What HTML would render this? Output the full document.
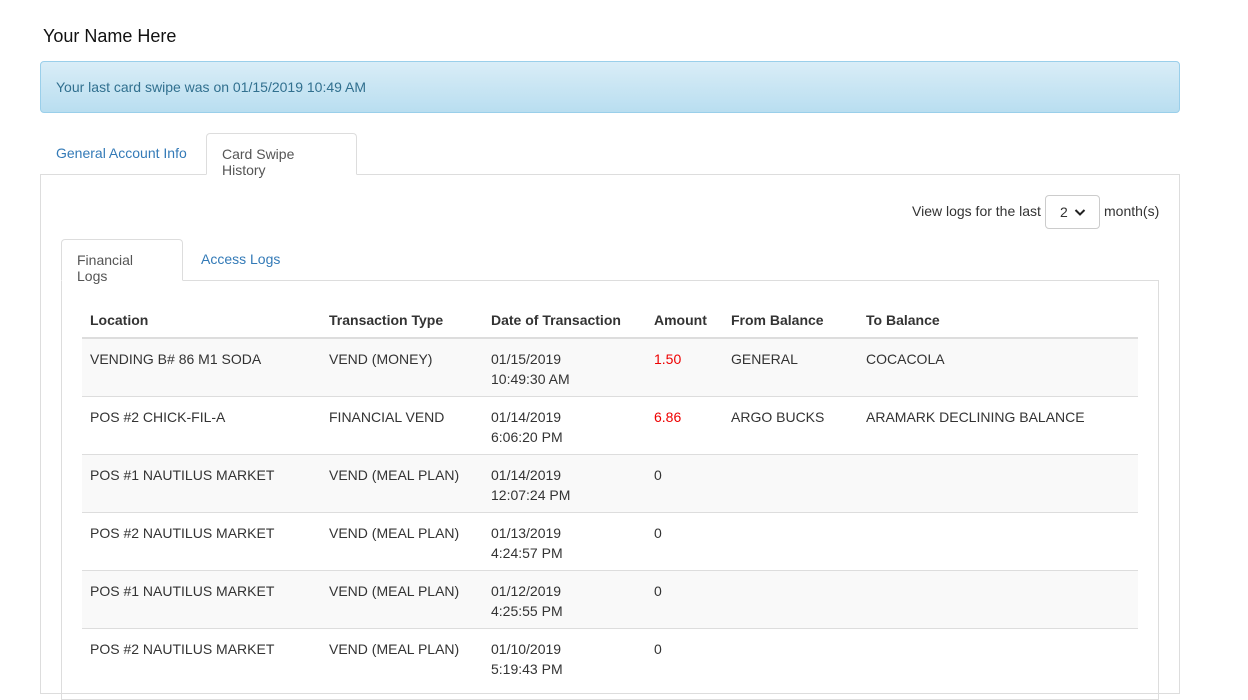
<!DOCTYPE html>
<html><head><style>
*{box-sizing:border-box}
body{margin:0;font-family:"Liberation Sans",Arial,sans-serif;font-size:14px;color:#333;background:#fff;width:1248px;height:681px;overflow:hidden;position:relative}
.abs{position:absolute}
h1{position:absolute;left:43px;top:26px;margin:0;font-size:18px;font-weight:normal;color:#111}
.alert{left:40px;top:61px;width:1140px;height:52px;border:1px solid #9acfea;border-radius:4px;background:linear-gradient(#d9edf7,#b9def0);color:#31708f;padding:17px 15px}
.tab{height:42px;padding:12px 15px;color:#337ab7}
.tab.act{border:1px solid #ddd;border-bottom:1px solid #fff;border-radius:4px 4px 0 0;color:#555;background:#fff}
.panel{left:40px;top:174px;width:1140px;height:520px;border:1px solid #ddd}
.panel2{left:61px;top:280px;width:1098px;height:420px;border:1px solid #ddd}
table{position:absolute;left:82px;top:301px;width:1056px;border-collapse:collapse}
th{text-align:left;padding:10px 8px 9px;border-bottom:2px solid #ddd;font-weight:bold;height:37px}
td{padding:10px 8px 7px;border-top:1px solid #ddd;vertical-align:top;line-height:20px;height:57px}
tr.s td{background:#f9f9f9}
.r{color:#e00}
</style></head><body>
<h1>Your Name Here</h1>
<div class="abs alert">Your last card swipe was on 01/15/2019 10:49 AM</div>
<div class="abs panel"></div>
<div class="abs tab" style="left:41px;top:133px">General Account Info</div>
<div class="abs tab act" style="left:206px;top:133px;width:151px">Card Swipe History</div>
<div class="abs" style="left:912px;top:203px">View logs for the last</div>
<div class="abs" style="left:1045px;top:195px;width:55px;height:34px;border:1px solid #ccc;border-radius:4px;padding:8px 0 0 14px">2 <svg width="12" height="9" viewBox="0 0 12 9" style="margin-left:2px"><path d="M1.5 2 L6 6.5 L10.5 2" fill="none" stroke="#222" stroke-width="2"/></svg></div>
<div class="abs" style="left:1104px;top:203px">month(s)</div>
<div class="abs panel2"></div>
<div class="abs tab act" style="left:61px;top:239px;width:122px">Financial Logs</div>
<div class="abs tab" style="left:186px;top:239px">Access Logs</div>
<table>
<colgroup><col style="width:239px"><col style="width:162px"><col style="width:163px"><col style="width:77px"><col style="width:135px"><col></colgroup>
<tr><th>Location</th><th>Transaction Type</th><th>Date of Transaction</th><th>Amount</th><th>From Balance</th><th>To Balance</th></tr>
<tr class="s"><td>VENDING B# 86 M1 SODA</td><td>VEND (MONEY)</td><td>01/15/2019<br>10:49:30 AM</td><td class="r">1.50</td><td>GENERAL</td><td>COCACOLA</td></tr>
<tr><td>POS #2 CHICK-FIL-A</td><td>FINANCIAL VEND</td><td>01/14/2019<br>6:06:20 PM</td><td class="r">6.86</td><td>ARGO BUCKS</td><td>ARAMARK DECLINING BALANCE</td></tr>
<tr class="s"><td>POS #1 NAUTILUS MARKET</td><td>VEND (MEAL PLAN)</td><td>01/14/2019<br>12:07:24 PM</td><td>0</td><td></td><td></td></tr>
<tr><td>POS #2 NAUTILUS MARKET</td><td>VEND (MEAL PLAN)</td><td>01/13/2019<br>4:24:57 PM</td><td>0</td><td></td><td></td></tr>
<tr class="s"><td>POS #1 NAUTILUS MARKET</td><td>VEND (MEAL PLAN)</td><td>01/12/2019<br>4:25:55 PM</td><td>0</td><td></td><td></td></tr>
<tr><td>POS #2 NAUTILUS MARKET</td><td>VEND (MEAL PLAN)</td><td>01/10/2019<br>5:19:43 PM</td><td>0</td><td></td><td></td></tr>
</table>
</body></html>
